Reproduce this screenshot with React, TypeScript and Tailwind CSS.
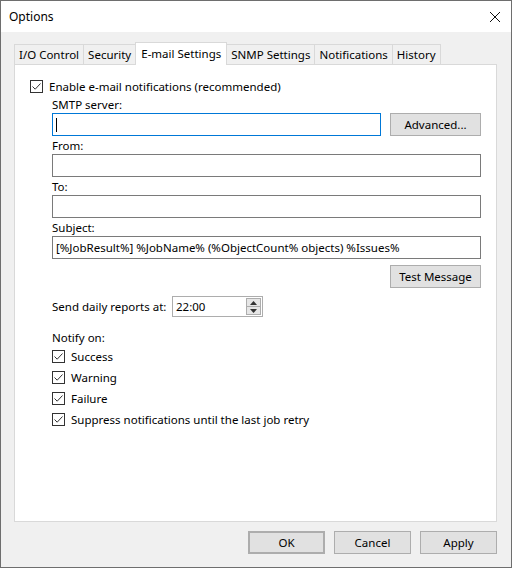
import React from 'react';

const font = { fontFamily: '"Noto Sans", "Segoe UI", sans-serif' };

function Check({ label, className = '' }: { label: string; className?: string }) {
  return (
    <div className={`flex items-center h-[21px] ${className}`}>
      <span className="w-[13px] h-[13px] border border-[#333] bg-white flex items-center justify-center shrink-0">
        <svg width="11" height="11" viewBox="0 0 11 11">
          <path d="M1.5 5.5 L4.2 8.2 L9.5 2.5" fill="none" stroke="#333" strokeWidth="1" />
        </svg>
      </span>
      <span className="ml-[6px]">{label}</span>
    </div>
  );
}

function Field({ children, className = '' }: { children?: React.ReactNode; className?: string }) {
  return (
    <div className={`h-[23px] bg-white border border-[#7a7a7a] flex items-center px-[3px] ${className}`}>{children}</div>
  );
}

function Btn({ label, className = '' }: { label: string; className?: string }) {
  return (
    <div className={`h-[23px] bg-[#e1e1e1] border border-[#adadad] flex items-center justify-center ${className}`}>
      {label}
    </div>
  );
}

function Label({ text, className = '' }: { text: string; className?: string }) {
  return <div className={`h-[15px] leading-[15px] mb-px ${className}`}>{text}</div>;
}

const tabs = ['I/O Control', 'Security', 'E-mail Settings', 'SNMP Settings', 'Notifications', 'History'];

export default function App() {
  return (
    <div style={font} className="w-[512px] h-[568px] border border-[#6e6e6e] bg-[#f0f0f0] text-[11.5px] text-black flex flex-col overflow-hidden">
      <div className="h-[31px] bg-white flex items-center justify-between pl-[8px] pr-[10px] shrink-0">
        <span className="text-[12px]">Options</span>
        <svg width="12" height="12" viewBox="0 0 12 12">
          <path d="M1 1 L11 11 M11 1 L1 11" stroke="#111" strokeWidth="1" />
        </svg>
      </div>
      <div className="px-[13px] pt-[10px] flex flex-col flex-1">
        <div className="flex items-end h-[22px] leading-none">
          {tabs.map((t) =>
            t === 'E-mail Settings' ? (
              <div key={t} className="h-[23px] -mb-px -ml-px relative z-10 bg-white border border-[#d9d9d9] border-b-0 px-[5px] flex items-center">
                {t}
              </div>
            ) : (
              <div key={t} className="h-[20px] bg-[#f0f0f0] border border-[#d9d9d9] border-b-0 -ml-px first:ml-0 px-[4px] flex items-center">
                {t}
              </div>
            ),
          )}
        </div>
        <div className="w-[483px] h-[458px] bg-white border border-[#d9d9d9] pl-[15px] pt-[11px] flex flex-col">
          <Check label="Enable e-mail notifications (recommended)" />
          <div className="pl-[22px] pr-[15px] flex flex-col">
            <Label text="SMTP server:" />
            <div className="flex items-center">
              <Field className="w-[329px] border-[#0078d7]">
                <span className="w-px h-[14px] bg-black" />
              </Field>
              <Btn label="Advanced..." className="w-[91px] ml-[9px]" />
            </div>
            <Label text="From:" className="mt-[2px]" />
            <Field />
            <Label text="To:" className="mt-[2px]" />
            <Field />
            <Label text="Subject:" className="mt-[2px]" />
            <Field>[%JobResult%] %JobName% (%ObjectCount% objects) %Issues%</Field>
            <div className="flex justify-end mt-[6px]">
              <Btn label="Test Message" className="w-[91px]" />
            </div>
            <div className="flex items-center mt-[8px]">
              <span className="w-[120px]">Send daily reports at:</span>
              <div className="h-[21px] w-[91px] bg-white border border-[#adadad] flex items-center pl-[3px] justify-between">
                <span>22:00</span>
                <div className="flex flex-col w-[15px] h-[17px] mr-px">
                  <div className="flex-1 bg-[#e6e6e6] border border-[#adadad] flex items-center justify-center">
                    <svg width="7" height="4" viewBox="0 0 7 4"><path d="M0 4 L3.5 0 L7 4 Z" fill="#333" /></svg>
                  </div>
                  <div className="flex-1 bg-[#e6e6e6] border border-[#adadad] border-t-0 flex items-center justify-center">
                    <svg width="7" height="4" viewBox="0 0 7 4"><path d="M0 0 L3.5 4 L7 0 Z" fill="#333" /></svg>
                  </div>
                </div>
              </div>
            </div>
            <div className="h-[16px] leading-[16px] mt-[13px]">Notify on:</div>
            <Check label="Success" />
            <Check label="Warning" />
            <Check label="Failure" />
            <Check label="Suppress notifications until the last job retry" />
          </div>
        </div>
        <div className="flex justify-end gap-[9px] mt-[9px] pr-px">
          <Btn label="OK" className="w-[77px] border-[#0078d7] border-2" />
          <Btn label="Cancel" className="w-[77px]" />
          <Btn label="Apply" className="w-[77px]" />
        </div>
      </div>
    </div>
  );
}
